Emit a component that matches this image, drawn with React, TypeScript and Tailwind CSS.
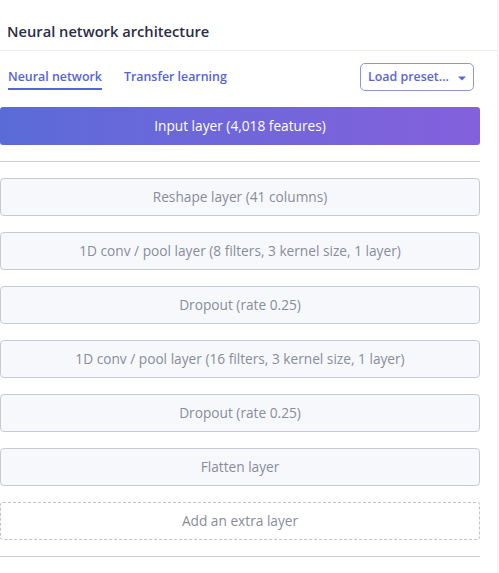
const layers = [
  "Reshape layer (41 columns)",
  "1D conv / pool layer (8 filters, 3 kernel size, 1 layer)",
  "Dropout (rate 0.25)",
  "1D conv / pool layer (16 filters, 3 kernel size, 1 layer)",
  "Dropout (rate 0.25)",
  "Flatten layer",
];

function Caret() {
  return (
    <svg width="8" height="5" viewBox="0 0 8 5" className="ml-[9px] mt-[2px]">
      <path d="M0 0.5 L8 0.5 L4 4.5 Z" fill="#5a67d3" />
    </svg>
  );
}

export default function App() {
  return (
    <div
      className="w-[499px] h-[573px] overflow-hidden bg-white"
      style={{ fontFamily: '"Open Sans", "Noto Sans", sans-serif' }}
    >
      <div className="w-[498px] h-full border-r border-[#eef0f4]">
        {/* header */}
        <div className="h-[51px] pt-[20px] px-[7px] border-b border-[#eceef2]">
          <h2 className="text-[14.7px] leading-[22px] font-semibold text-[#2b2d45]">
            Neural network architecture
          </h2>
        </div>

        <div className="pr-[17px]">
          {/* tabs */}
          <div className="flex items-start justify-between pt-[12px] pl-[8px] pr-[6px]">
            <div className="flex items-start gap-[22px] text-[12.4px] leading-[18px] font-semibold text-[#5565d4]">
              <span className="pt-[5px] pb-[2px] border-b-2 border-[#5565d4]">Neural network</span>
              <span className="pt-[5px]">Transfer learning</span>
            </div>
            <button className="h-[28px] w-[114px] flex items-center justify-center rounded-[5px] border border-[#8d95e2] text-[12.4px] font-semibold text-[#5a67d3]">
              Load preset...
              <Caret />
            </button>
          </div>

          {/* input */}
          <div className="mt-[16px] h-[38px] pt-px flex items-center justify-center rounded-[3px] bg-linear-to-r from-[#5a6bd8] to-[#8460dd] text-[13.7px] text-white">
            Input layer (4,018 features)
          </div>

          <div className="mt-[16px] h-px bg-[#c9ccd3]" />

          <div className="mt-[16px] flex flex-col gap-[16px]">
            {layers.map((l, i) => (
              <div
                key={i}
                className="h-[38px] pt-px flex items-center justify-center rounded-[4px] border border-[#c6cad3] bg-[#f7f8fc] text-[13.7px] text-[#878d9a]"
              >
                {l}
              </div>
            ))}
            <div className="h-[38px] pt-px flex items-center justify-center rounded-[3px] border border-dashed border-[#bfc3cb] bg-white text-[13.7px] text-[#878d9a]">
              Add an extra layer
            </div>
          </div>

          <div className="mt-[16px] h-px bg-[#c9ccd3]" />
        </div>
      </div>
    </div>
  );
}
